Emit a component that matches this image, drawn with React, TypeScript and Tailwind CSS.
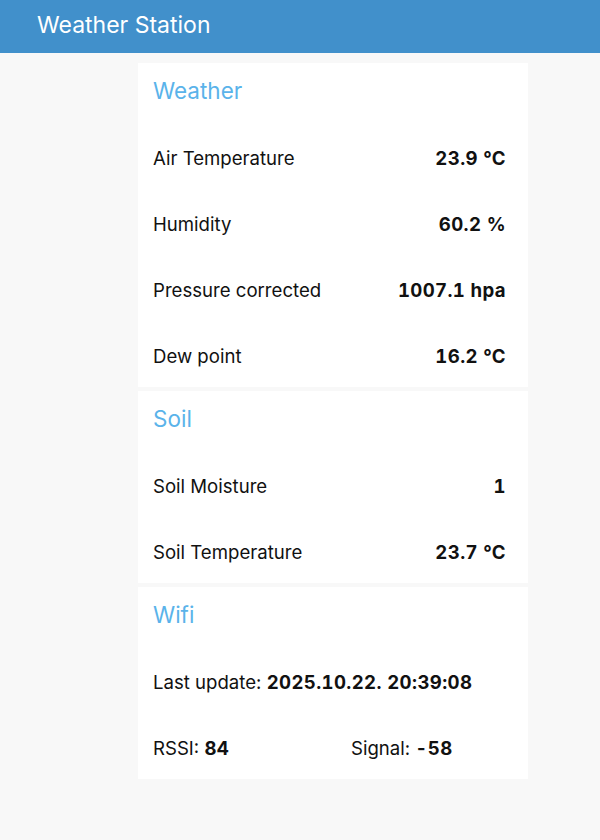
import React from 'react';

interface Reading {
  label: string;
  value: string;
}

const weather: Reading[] = [
  { label: 'Air Temperature', value: '23.9 °C' },
  { label: 'Humidity', value: '60.2 %' },
  { label: 'Pressure corrected', value: '1007.1 hpa' },
  { label: 'Dew point', value: '16.2 °C' },
];

const soil: Reading[] = [
  { label: 'Soil Moisture', value: '1' },
  { label: 'Soil Temperature', value: '23.7 °C' },
];

function Card({ title, children }: { title: string; children: React.ReactNode }) {
  return (
    <section className="bg-white pt-[13px] pl-[15px] pr-[22px]">
      <h2 className="h-[30px] leading-[30px] text-[22.5px] text-[#5ab3ea]">{title}</h2>
      <div className="mt-[23px] flex flex-col gap-[6px]">{children}</div>
    </section>
  );
}

function Row({ label, value }: Reading) {
  return (
    <div className="h-[60px] flex items-center justify-between">
      <span>{label}</span>
      <b className="font-bold tracking-[0.02em] tabular-nums">{value}</b>
    </div>
  );
}

export default function App() {
  return (
    <div className="min-h-[840px] bg-[#f8f8f8] text-[18.6px] text-[#111]" style={{ fontFamily: 'Inter, "Noto Sans", sans-serif' }}>
      {/* Top bar */}
      <header className="h-[53px] bg-[#4190cb] flex items-center pl-[37px] pb-[2px]">
        <h1 className="text-[23px] text-white">Weather Station</h1>
      </header>

      <main className="ml-[138px] w-[390px] pt-[10px] flex flex-col gap-[4px]">
        <Card title="Weather">
          {weather.map((r) => (
            <Row key={r.label} {...r} />
          ))}
        </Card>

        <Card title="Soil">
          {soil.map((r) => (
            <Row key={r.label} {...r} />
          ))}
        </Card>

        <Card title="Wifi">
          <div className="h-[60px] flex items-center">
            <span>
              Last update: <b className="tracking-[0.02em] tabular-nums">2025.10.22. 20:39:08</b>
            </span>
          </div>
          <div className="h-[60px] grid grid-cols-[198px_1fr] items-center">
            <span>
              RSSI: <b className="tracking-[0.02em] tabular-nums">84</b>
            </span>
            <span>
              Signal: <b className="tracking-[0.02em] tabular-nums">-58</b>
            </span>
          </div>
        </Card>
      </main>
    </div>
  );
}
